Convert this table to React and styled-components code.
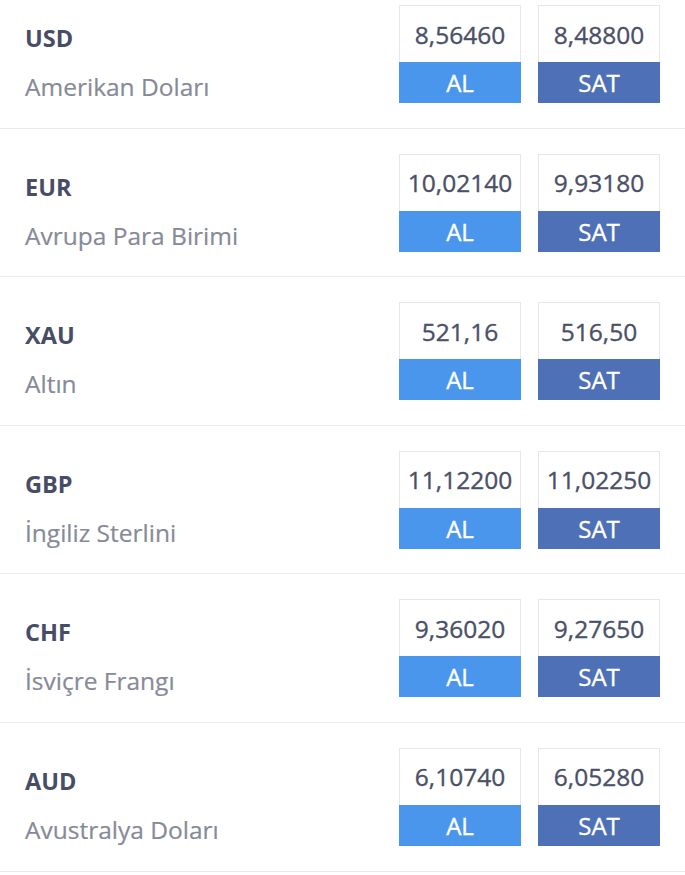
import styled, { createGlobalStyle } from "styled-components";

const rates = [
  { code: "USD", name: "Amerikan Doları", buy: "8,56460", sell: "8,48800" },
  { code: "EUR", name: "Avrupa Para Birimi", buy: "10,02140", sell: "9,93180" },
  { code: "XAU", name: "Altın", buy: "521,16", sell: "516,50" },
  { code: "GBP", name: "İngiliz Sterlini", buy: "11,12200", sell: "11,02250" },
  { code: "CHF", name: "İsviçre Frangı", buy: "9,36020", sell: "9,27650" },
  { code: "AUD", name: "Avustralya Doları", buy: "6,10740", sell: "6,05280" },
];

const GlobalStyle = createGlobalStyle`
  * {
    box-sizing: border-box;
  }
  body {
    margin: 0;
    background: #ffffff;
    font-family: "Open Sans", "Noto Sans", sans-serif;
    overflow: hidden;
  }
`;

const App = () => {
  return (
    <>
      <GlobalStyle />
      <List>
        {rates.map((r) => (
          <Row key={r.code}>
            <Info>
              <Code>{r.code}</Code>
              <Name>{r.name}</Name>
            </Info>
            <Prices>
              <PriceBox>
                <Value>{r.buy}</Value>
                <Action kind="buy">AL</Action>
              </PriceBox>
              <PriceBox>
                <Value>{r.sell}</Value>
                <Action kind="sell">SAT</Action>
              </PriceBox>
            </Prices>
          </Row>
        ))}
      </List>
    </>
  );
};

// list is scrolled a little, first row is cut at the top
const List = styled.div`
  display: flex;
  flex-direction: column;
  margin-top: -20px;
`;

const Row = styled.div`
  display: flex;
  justify-content: space-between;
  align-items: flex-start;
  padding: 25px 25px 24.6px 25px;
  border-bottom: 1px solid #ebebee;
`;

const Info = styled.div`
  display: flex;
  flex-direction: column;
  padding-top: 17px;
`;

const Code = styled.div`
  font-size: 23.5px;
  font-weight: 700;
  color: #474d66;
  line-height: 32px;
`;

const Name = styled.div`
  font-size: 24.5px;
  color: #868a98;
  line-height: 32px;
  margin-top: 17px;
  -webkit-text-stroke: 0.2px #868a98;
`;

const Prices = styled.div`
  display: flex;
  gap: 17px;
`;

const PriceBox = styled.div`
  display: flex;
  flex-direction: column;
  width: 122px;
`;

const Value = styled.div`
  height: 57px;
  border: 1px solid #e6e7ec;
  border-bottom: none;
  display: flex;
  align-items: center;
  justify-content: center;
  font-size: 24.5px;
  color: #4a5068;
  -webkit-text-stroke: 0.35px #4a5068;
`;

const Action = styled.div`
  height: 41px;
  display: flex;
  align-items: center;
  justify-content: center;
  font-size: 24px;
  color: #ffffff;
  -webkit-text-stroke: 0.35px #ffffff;
  background: ${(p) => (p.kind === "buy" ? "#4a96ec" : "#4e70b6")};
`;

export default App;
